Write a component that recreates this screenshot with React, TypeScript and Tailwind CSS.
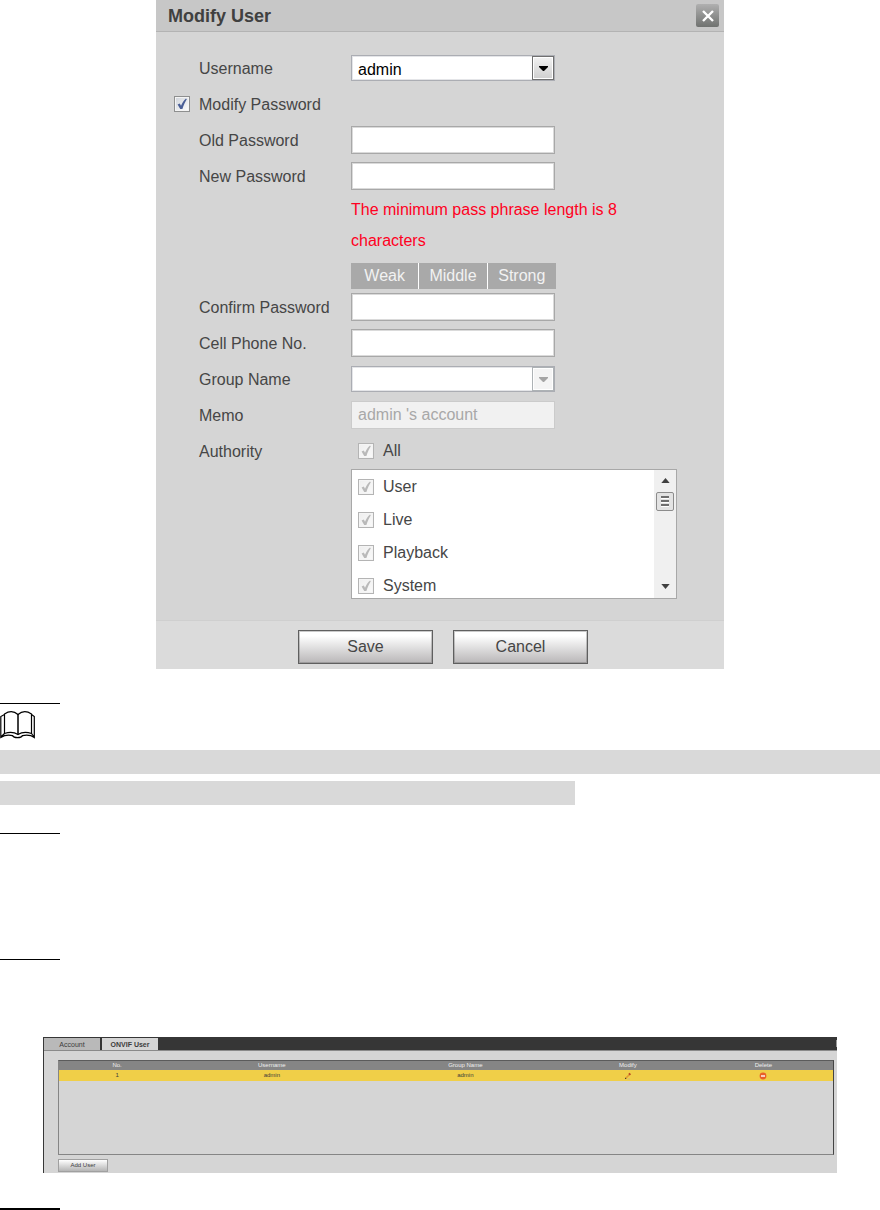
import React from "react";

function Check({ id, label, muted, checked = true }: { id: string; label?: string; muted?: boolean; checked?: boolean }) {
  return (
    <span className="relative flex size-4 shrink-0">
      <input
        id={id}
        type="checkbox"
        defaultChecked={checked}
        disabled={muted}
        aria-label={label}
        className="size-4 appearance-none border border-[#8e8f8f] bg-linear-to-br from-[#cfd3da] to-white shadow-[inset_0_0_0_1px_#f4f4f4] disabled:border-[#b4b4b4] disabled:from-[#eeeeee] disabled:to-[#fafafa]"
      />
      <svg viewBox="0 0 16 16" aria-hidden="true" className={"pointer-events-none absolute inset-0 " + (muted ? "text-[#b9b9b9]" : "text-[#4a5f97]")}>
        <path d="M3.6 8.4 L5.8 7.6 L7 9.8 C8.2 6.6 9.8 4.2 12 2.4 L12.8 3.2 C11 6 9.6 9 8.4 13 L6.2 13 Z" fill="currentColor" />
      </svg>
    </span>
  );
}

function Row({ id, label, before, children }: { id: string; label: string; before?: React.ReactNode; children?: React.ReactNode }) {
  return (
    <div className="flex h-9 items-center">
      <div className="flex w-[25px] shrink-0">{before}</div>
      <label htmlFor={id} className="w-[152px] shrink-0 pt-[2px] whitespace-nowrap">{label}</label>
      {children}
    </div>
  );
}

function Drop({ id, value, muted }: { id: string; value: string; muted?: boolean }) {
  return (
    <div className="relative h-[26px] w-[204px]">
      <select
        id={id}
        disabled={muted}
        className="size-full appearance-none border border-[#abadb3] bg-white pt-[2px] pr-6 pl-[6px] text-black shadow-[inset_0_0_0_1px_#e4e5e8] disabled:opacity-100"
      >
        <option>{value}</option>
      </select>
      <span
        className={
          "pointer-events-none absolute inset-y-[1px] right-[1px] flex w-[22px] items-center justify-center border shadow-[inset_0_0_0_1px_white] " +
          (muted ? "border-[#adb2b5] bg-[#f4f4f4] text-[#a5a5a5]" : "border-[#707070] bg-linear-to-b from-[#f2f2f2] to-[#cfcfcf] text-black")
        }
      >
        <svg viewBox="0 0 9 5" className="h-[5px] w-[9px]" aria-hidden="true">
          <path d="M0 0H9V1L5 5H4L0 1Z" fill="currentColor" />
        </svg>
      </span>
    </div>
  );
}

const field = "h-7 w-[204px] border border-[#a8a8a8] bg-white px-[6px] shadow-[inset_0_0_0_1px_#dadada]";
const action = "h-[34px] w-[135px] border border-[#5f5f5f] bg-linear-to-b from-white from-15% to-[#b9b7b8] shadow-[inset_0_0_0_1px_#5f5f5f55]";

function ModifyUser() {
  return (
    <section className="mx-auto w-full max-w-[568px] bg-[#d5d5d5] text-base text-[#464646]">
      <header className="flex h-8 items-center justify-between border-b border-[#b3b3b3] bg-[#c7c7c7] pr-[5px] pl-3">
        <h1 className="text-lg font-bold text-[#404040]">Modify User</h1>
        <button aria-label="Close" className="flex size-[23px] items-center justify-center rounded-xs bg-linear-to-b from-[#b0b0b0] to-[#707270]">
          <svg viewBox="0 0 14 14" className="size-[14px]" aria-hidden="true">
            <path d="M2 2L12 12M12 2L2 12" stroke="white" strokeWidth="2.4" />
          </svg>
        </button>
      </header>
      <form className="pt-[18px] pr-[47px] pb-[21px] pl-[18px]">
        <Row id="username" label="Username"><Drop id="username" value="admin" /></Row>
        <Row id="modify" label="Modify Password" before={<Check id="modify" />} />
        <Row id="old" label="Old Password"><input id="old" type="password" className={field} /></Row>
        <Row id="new" label="New Password"><input id="new" type="password" className={field} /></Row>
        <div className="pl-[177px]">
          <p className="max-w-[300px] leading-[31px] text-[#ff0022]">The minimum pass phrase length is 8 characters</p>
          <div className="mt-[7px] grid h-[26px] w-[205px] grid-cols-3 divide-x divide-white bg-[#a9a9a9] text-center leading-[26px] text-[#f2f2f2]">
            <span>Weak</span>
            <span>Middle</span>
            <span>Strong</span>
          </div>
        </div>
        <Row id="confirm" label="Confirm Password"><input id="confirm" type="password" className={field} /></Row>
        <Row id="phone" label="Cell Phone No."><input id="phone" type="tel" className={field} /></Row>
        <Row id="group" label="Group Name"><Drop id="group" value="" muted /></Row>
        <Row id="memo" label="Memo">
          <input id="memo" disabled defaultValue="admin 's account" className="h-7 w-[204px] border border-[#cbcbcb] bg-[#f1f1f1] px-[6px] text-[#a8a8a8]" />
        </Row>
        <Row id="all" label="Authority">
          <div className="flex items-center gap-[9px] pl-[7px]">
            <Check id="all" label="All" muted />
            <span>All</span>
          </div>
        </Row>
        <div className="ml-[177px] flex h-[130px] border border-[#a8a8a8] bg-white">
          <ul className="grow overflow-hidden pl-[6px]">
            {["User", "Live", "Playback", "System"].map((name) => (
              <li key={name} className="flex h-[33px] items-center gap-[9px]">
                <Check id={name} muted />
                <label htmlFor={name}>{name}</label>
              </li>
            ))}
          </ul>
          <div className="flex w-[22px] shrink-0 flex-col items-center justify-between bg-[#f0f0f0] pt-2 pb-[9px]">
            <div className="flex flex-col items-center gap-[9px]">
              <svg viewBox="0 0 10 6" className="h-[5px] w-[9px]" aria-hidden="true"><path d="M0 6L5 0L10 6Z" fill="#404040" /></svg>
              <svg viewBox="0 0 18 19" className="h-[19px] w-[18px]" aria-hidden="true">
                <rect x="0.5" y="0.5" width="17" height="18" rx="1.5" fill="#e3e3e3" stroke="#8c8c8c" />
                <path d="M5 5H13M5 9H13M5 13H13" stroke="#4a4a4a" strokeWidth="1.6" />
                <path d="M5 6.5H13M5 10.5H13M5 14.5H13" stroke="white" />
              </svg>
            </div>
            <svg viewBox="0 0 10 6" className="h-[5px] w-[9px]" aria-hidden="true"><path d="M0 0L5 6L10 0Z" fill="#404040" /></svg>
          </div>
        </div>
      </form>
      <footer className="flex h-[49px] justify-center gap-5 border-t border-[#cfcfcf] bg-[#dbdbdb] pt-[9px] pl-[6px]">
        <button className={action}>Save</button>
        <button className={action}>Cancel</button>
      </footer>
    </section>
  );
}

function OnvifUsers() {
  return (
    <section className="mx-[43px] mt-[77px] h-[136px] border-l border-[#383838] bg-[#d5d5d5] text-[6px] leading-[9px] text-[#3c3c3c]">
      <nav className="flex h-[14px] items-end gap-[2px] border-b border-[#8a8a8a] bg-[#363636] text-[7px]">
        <button className="h-3 w-14 bg-[#b9b9b9]">Account</button>
        <button className="h-3 w-14 bg-[#d5d5d5] font-bold">ONVIF User</button>
        <span className="ml-auto h-[7px] w-[1px] self-center bg-[#9a9a9a]" />
      </nav>
      <div className="pt-[9px] pr-[3px] pl-[14px]">
        <div className="h-[95px] border border-[#858585] border-t-[#5b5b5b] border-r-[#444444]">
          <table className="w-full table-fixed border-collapse text-center">
            <thead>
              <tr className="h-[9px] bg-[#858585] text-[#eeeeee]">
                <th className="w-[15%] p-0 font-normal">No.</th>
                <th className="w-[25%] p-0 font-normal">Username</th>
                <th className="w-[25%] p-0 font-normal">Group Name</th>
                <th className="w-[17%] p-0 font-normal">Modify</th>
                <th className="w-[18%] p-0 font-normal">Delete</th>
              </tr>
            </thead>
            <tbody>
              <tr className="h-[11px] bg-[#f0cf48]">
                <td className="p-0">1</td>
                <td className="p-0">admin</td>
                <td className="p-0">admin</td>
                <td className="p-0">
                  <button aria-label="Modify admin" className="mx-auto flex">
                    <svg viewBox="0 0 8 8" className="size-2">
                      <path d="M1.5 6.5L5 3" stroke="#e39b32" strokeWidth="1.6" />
                      <path d="M5 2.8L6.3 1.5" stroke="#bd4522" strokeWidth="2" />
                      <path d="M1 5.5V7H2.6Z" fill="#333333" />
                      <path d="M3.5 7H6" stroke="#c4b58a" strokeWidth="0.8" />
                    </svg>
                  </button>
                </td>
                <td className="p-0">
                  <button aria-label="Delete admin" className="mx-auto flex">
                    <svg viewBox="0 0 8 8" className="size-2">
                      <circle cx="4" cy="4" r="3.4" fill="#e9602a" />
                      <path d="M2 4H6" stroke="white" strokeWidth="1.4" />
                    </svg>
                  </button>
                </td>
              </tr>
            </tbody>
          </table>
        </div>
        <button className="mt-1 h-[13px] w-[50px] border border-[#a0a0a0] bg-linear-to-b from-white to-[#b5b5b5]">Add User</button>
      </div>
    </section>
  );
}

export default function App() {
  return (
    <main className="bg-white font-['Liberation_Sans',Arial,sans-serif]">
      <ModifyUser />
      <hr className="mt-[34px] w-[60px] border-black" />
      <svg viewBox="0 0 35 28" className="mt-[7px] h-7 w-[35px]" fill="none" stroke="black" strokeWidth="1.2" aria-hidden="true">
        <path d="M4.5 3C9 0 14 0 18 3.5C22 0 27 0 31.5 3V22.5C27 21 22 21 18 23.5C14 21 9 21 4.5 22.5Z" />
        <path d="M18 3V23.5" strokeWidth="1.5" />
        <path d="M4.5 3.5L0.8 5.5V26.5C5 23.8 9 23.8 12.5 24.6C14 27.4 21 27.4 22.5 24.6C27 23.8 31 24 34.3 26.5V5.5L31.5 3.5M0.8 26L4.5 22.5M34.3 26L31.5 22.5" />
      </svg>
      <div className="mt-[11px] h-6 bg-[#d9d9d9]" />
      <div className="mt-[7px] h-6 w-[575px] max-w-full bg-[#d9d9d9]" />
      <hr className="mt-7 w-[60px] border-black" />
      <hr className="mt-[125px] w-[60px] border-black" />
      <OnvifUsers />
      <hr className="mt-[35px] w-[60px] border-t-2 border-black" />
    </main>
  );
}
